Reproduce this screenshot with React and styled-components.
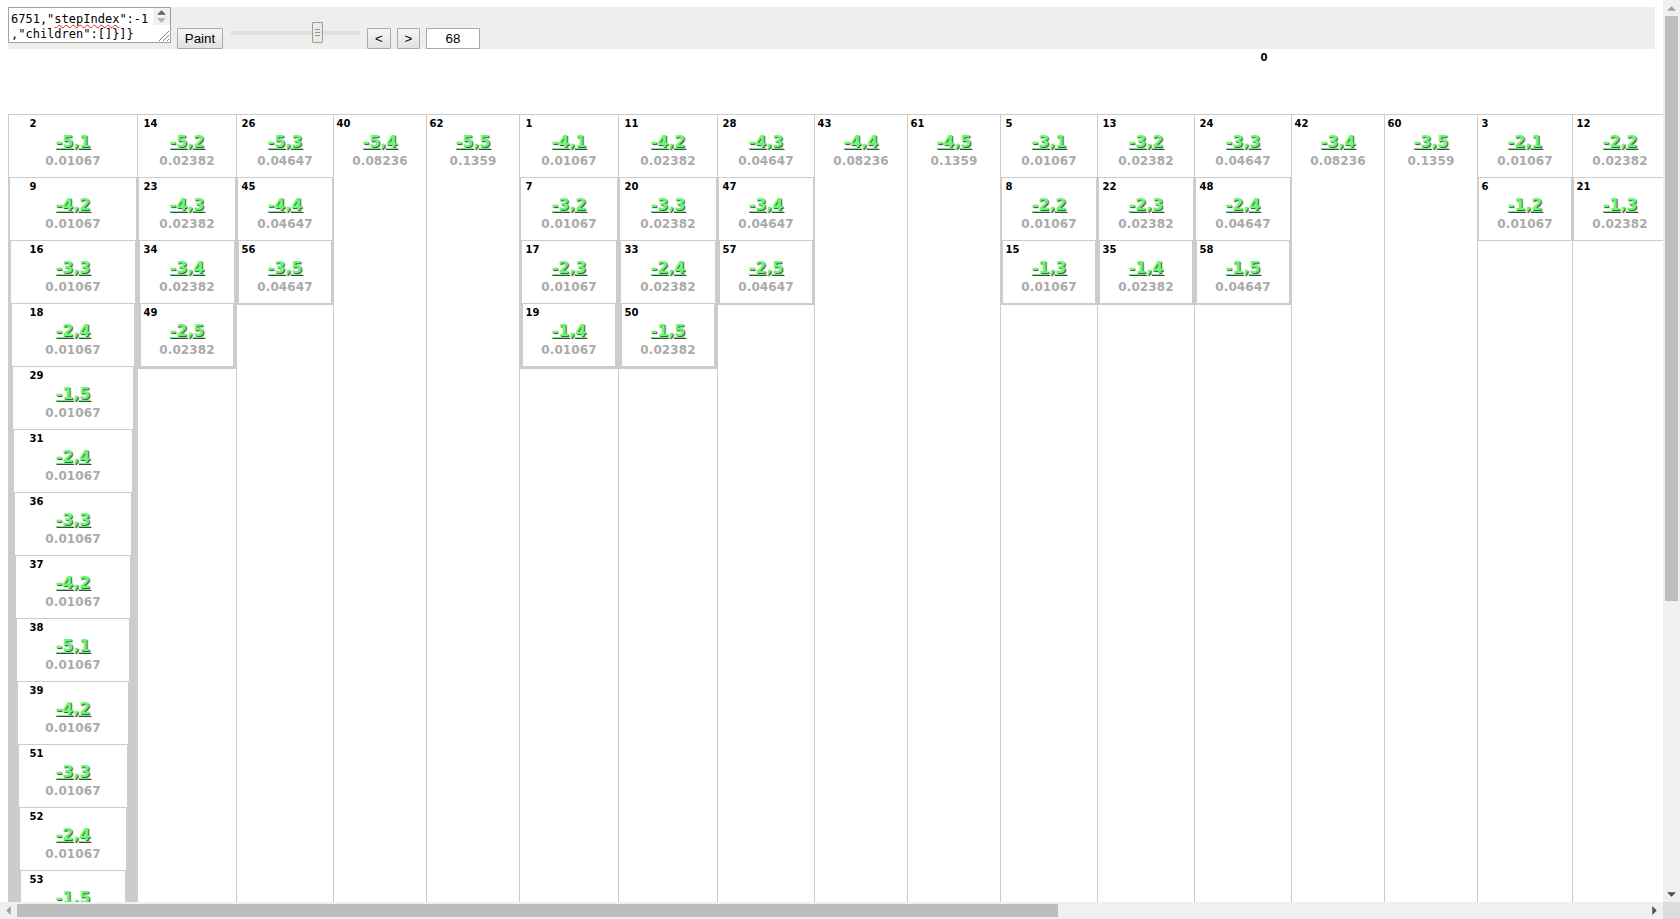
import React from "react";
import styled, { createGlobalStyle } from "styled-components";

const GlobalStyle = createGlobalStyle`
  html, body {
    margin: 0;
    height: 100%;
    overflow: hidden;
    background: #fff;
  }
`;

const Page = styled.div`
  height: 100vh;
  display: flex;
  flex-direction: column;
`;

const Middle = styled.div`
  flex: 1;
  min-height: 0;
  display: flex;
`;

const Viewport = styled.div`
  flex: 1;
  min-width: 0;
  overflow: hidden;
  padding: 7px 8px 0;
`;

const Toolbar = styled.div`
  height: 42px;
  background: #eeeeee;
  display: flex;
  align-items: flex-start;
`;

const Editor = styled.div`
  width: 163px;
  height: 36px;
  box-sizing: border-box;
  border: 1px solid #a0a0a0;
  background: #fff;
  display: flex;
  flex-shrink: 0;
`;

const EditorText = styled.div`
  flex: 1;
  padding: 4px 0 0 2px;
  font: 12px/15px "DejaVu Sans Mono", monospace;
  color: #000;
  white-space: pre;
`;

const Misspelt = styled.span`
  text-decoration: underline wavy #e02020 1px;
  text-decoration-skip-ink: none;
`;

const EditorScroll = styled.div`
  width: 17px;
  display: flex;
  flex-direction: column;
`;

const EditorArrows = styled.div`
  height: 17px;
  background: #f0f0f0;
  display: flex;
  flex-direction: column;
  align-items: center;
  justify-content: center;
  gap: 3px;
`;

const EditorCorner = styled.div`
  flex: 1;
  display: flex;
  align-items: flex-end;
  justify-content: flex-end;
`;

const Button = styled.button`
  height: 21px;
  width: ${(p) => p.$w}px;
  margin: 21px ${(p) => p.$mr}px 0 ${(p) => p.$ml}px;
  padding: 0;
  box-sizing: border-box;
  flex-shrink: 0;
  border: 1px solid #a9a9a9;
  border-radius: 1px;
  background: linear-gradient(#f6f6f6, #e2e2e2);
  font: 13.33px "Liberation Sans", sans-serif;
  color: #000;
`;

const Slider = styled.div`
  width: 129px;
  height: 21px;
  margin: 15px 7px 0 8px;
  flex-shrink: 0;
  display: flex;
  align-items: center;
  position: relative;
`;

const SliderTrack = styled.div`
  width: 100%;
  height: 4px;
  background: #e3dfda;
`;

const SliderHandle = styled.div`
  position: absolute;
  left: 81px;
  top: 0;
  width: 11px;
  height: 21px;
  box-sizing: border-box;
  border: 1px solid #a19b92;
  border-radius: 1px;
  background: #ece9e5;
  display: flex;
  flex-direction: column;
  align-items: center;
  justify-content: center;
  gap: 2px;
`;

const Grip = styled.span`
  width: 5px;
  height: 1px;
  background: #9a948c;
`;

const StepInput = styled.input`
  width: 54px;
  height: 21px;
  margin: 21px 0 0 6px;
  padding: 0;
  box-sizing: border-box;
  border: 1px solid #a9a9a9;
  background: #fff;
  text-align: center;
  font: 13.33px "Liberation Sans", sans-serif;
  color: #000;
  outline: none;
`;

const Tree = styled.div`
  width: 2512px;
`;

const RootLabel = styled.div`
  height: 65px;
  padding-top: 3px;
  box-sizing: border-box;
  text-align: center;
  font: bold 10px/12px "DejaVu Sans", Verdana, sans-serif;
  color: #000;
`;

const Columns = styled.div`
  display: flex;
  align-items: stretch;
`;

const Box = styled.div`
  border: 1px solid #cccccc;
  box-sizing: border-box;
  background: #fff;
`;

const Column = styled(Box)`
  width: ${(p) => p.$w}px;
  flex-shrink: 0;
  margin-left: -1px;
  &:first-child {
    margin-left: 0;
  }
`;

const Head = styled.div`
  height: 62px;
  display: flex;
  justify-content: center;
`;

const HeadInner = styled.div`
  width: 87px;
  flex-shrink: 0;
`;

const Index = styled.div`
  height: 12px;
  padding-top: 3px;
  font: bold 10px/12px "DejaVu Sans", Verdana, sans-serif;
  color: #000;
`;

const Value = styled.div`
  height: 21px;
  margin-top: 1px;
  text-align: center;
  font: bold 16px/21px "DejaVu Sans", Verdana, sans-serif;
  color: #62fa72;
  text-decoration: underline;
  text-shadow: 1px 1px 1px #444;
`;

const Prob = styled.div`
  margin-top: 1px;
  text-align: center;
  font: bold 12px/16px "DejaVu Sans", Verdana, sans-serif;
  letter-spacing: 0.1px;
  color: #aaaaaa;
`;

const VBar = styled.div`
  width: 17px;
  flex-shrink: 0;
  background: #f0f0f0;
  display: flex;
  flex-direction: column;
  align-items: center;
`;

const VThumb = styled.div`
  width: 13px;
  height: 585px;
  background: #bdbdbd;
`;

const HBar = styled.div`
  height: 17px;
  flex-shrink: 0;
  background: #f0f0f0;
  display: flex;
  align-items: center;
`;

const HThumb = styled.div`
  width: 1041px;
  height: 13px;
  background: #bdbdbd;
`;

const Filler = styled.div`
  flex: 1;
`;

const ArrowCell = styled.div`
  width: 17px;
  height: 16px;
  flex-shrink: 0;
  display: flex;
  align-items: center;
  justify-content: center;
`;

const Corner = styled.div`
  width: 17px;
  height: 17px;
  flex-shrink: 0;
  background: #dcdcdc;
`;

const Arrow = ({ dir, color }) => {
  const points = {
    up: "0,4 4,0 8,4",
    down: "0,0 8,0 4,4",
    left: "4,0 4,8 0,4",
    right: "0,0 0,8 4,4",
  };
  const vertical = dir === "up" || dir === "down";
  return (
    <svg width={vertical ? 9 : 5} height={vertical ? 5 : 9} viewBox={vertical ? "0 0 8 4" : "0 0 4 8"}>
      <polygon points={points[dir]} fill={color} />
    </svg>
  );
};

const columns = [
  { w: 130, prob: "0.01067", cells: [[2, "-5,1"], [9, "-4,2"], [16, "-3,3"], [18, "-2,4"], [29, "-1,5"], [31, "-2,4"], [36, "-3,3"], [37, "-4,2"], [38, "-5,1"], [39, "-4,2"], [51, "-3,3"], [52, "-2,4"], [53, "-1,5"]] },
  { w: 100, prob: "0.02382", cells: [[14, "-5,2"], [23, "-4,3"], [34, "-3,4"], [49, "-2,5"]] },
  { w: 98, prob: "0.04647", cells: [[26, "-5,3"], [45, "-4,4"], [56, "-3,5"]] },
  { w: 94, prob: "0.08236", cells: [[40, "-5,4"]] },
  { w: 94, prob: "0.1359", cells: [[62, "-5,5"]] },
  { w: 100, prob: "0.01067", cells: [[1, "-4,1"], [7, "-3,2"], [17, "-2,3"], [19, "-1,4"]] },
  { w: 100, prob: "0.02382", cells: [[11, "-4,2"], [20, "-3,3"], [33, "-2,4"], [50, "-1,5"]] },
  { w: 98, prob: "0.04647", cells: [[28, "-4,3"], [47, "-3,4"], [57, "-2,5"]] },
  { w: 94, prob: "0.08236", cells: [[43, "-4,4"]] },
  { w: 94, prob: "0.1359", cells: [[61, "-4,5"]] },
  { w: 98, prob: "0.01067", cells: [[5, "-3,1"], [8, "-2,2"], [15, "-1,3"]] },
  { w: 98, prob: "0.02382", cells: [[13, "-3,2"], [22, "-2,3"], [35, "-1,4"]] },
  { w: 98, prob: "0.04647", cells: [[24, "-3,3"], [48, "-2,4"], [58, "-1,5"]] },
  { w: 94, prob: "0.08236", cells: [[42, "-3,4"]] },
  { w: 94, prob: "0.1359", cells: [[60, "-3,5"]] },
  { w: 96, prob: "0.01067", cells: [[3, "-2,1"], [6, "-1,2"]] },
  { w: 96, prob: "0.02382", cells: [[12, "-2,2"], [21, "-1,3"]] },
];

const CellHead = ({ cell, prob }) => (
  <Head>
    <HeadInner>
      <Index>{cell[0]}</Index>
      <Value>{cell[1]}</Value>
      <Prob>{prob}</Prob>
    </HeadInner>
  </Head>
);

// every next cell sits inside the one above it, so the borders pile up on both sides
const Nested = ({ cells, prob }) => {
  if (cells.length === 0) return null;
  return (
    <Box>
      <CellHead cell={cells[0]} prob={prob} />
      <Nested cells={cells.slice(1)} prob={prob} />
    </Box>
  );
};

const App = () => {
  return (
    <Page>
      <GlobalStyle />
      <Middle>
        <Viewport>
          <Toolbar>
            <Editor>
              <EditorText>
                {'6751,"'}
                <Misspelt>stepIndex</Misspelt>
                {'":-1\n,"children":[]}]}'}
              </EditorText>
              <EditorScroll>
                <EditorArrows>
                  <Arrow dir="up" color="#606060" />
                  <Arrow dir="down" color="#b0b0b0" />
                </EditorArrows>
                <EditorCorner>
                  <svg width="12" height="12" viewBox="0 0 12 12">
                    <path d="M1 11 L11 1 M5 11 L11 5 M9 11 L11 9" stroke="#808080" strokeWidth="1" fill="none" />
                  </svg>
                </EditorCorner>
              </EditorScroll>
            </Editor>
            <Button $w={46} $ml={6} $mr={0}>Paint</Button>
            <Slider>
              <SliderTrack />
              <SliderHandle>
                <Grip />
                <Grip />
                <Grip />
              </SliderHandle>
            </Slider>
            <Button $w={24} $ml={0} $mr={6}>&lt;</Button>
            <Button $w={23} $ml={0} $mr={0}>&gt;</Button>
            <StepInput value="68" readOnly />
          </Toolbar>
          <Tree>
            <RootLabel>0</RootLabel>
            <Columns>
              {columns.map((col) => (
                <Column key={col.cells[0][0]} $w={col.w}>
                  <CellHead cell={col.cells[0]} prob={col.prob} />
                  <Nested cells={col.cells.slice(1)} prob={col.prob} />
                </Column>
              ))}
            </Columns>
          </Tree>
        </Viewport>
        <VBar>
          <ArrowCell><Arrow dir="up" color="#a0a0a0" /></ArrowCell>
          <VThumb />
          <Filler />
          <ArrowCell><Arrow dir="down" color="#505050" /></ArrowCell>
        </VBar>
      </Middle>
      <HBar>
        <ArrowCell><Arrow dir="left" color="#a0a0a0" /></ArrowCell>
        <HThumb />
        <Filler />
        <ArrowCell><Arrow dir="right" color="#505050" /></ArrowCell>
        <Corner />
      </HBar>
    </Page>
  );
};

export default App;
